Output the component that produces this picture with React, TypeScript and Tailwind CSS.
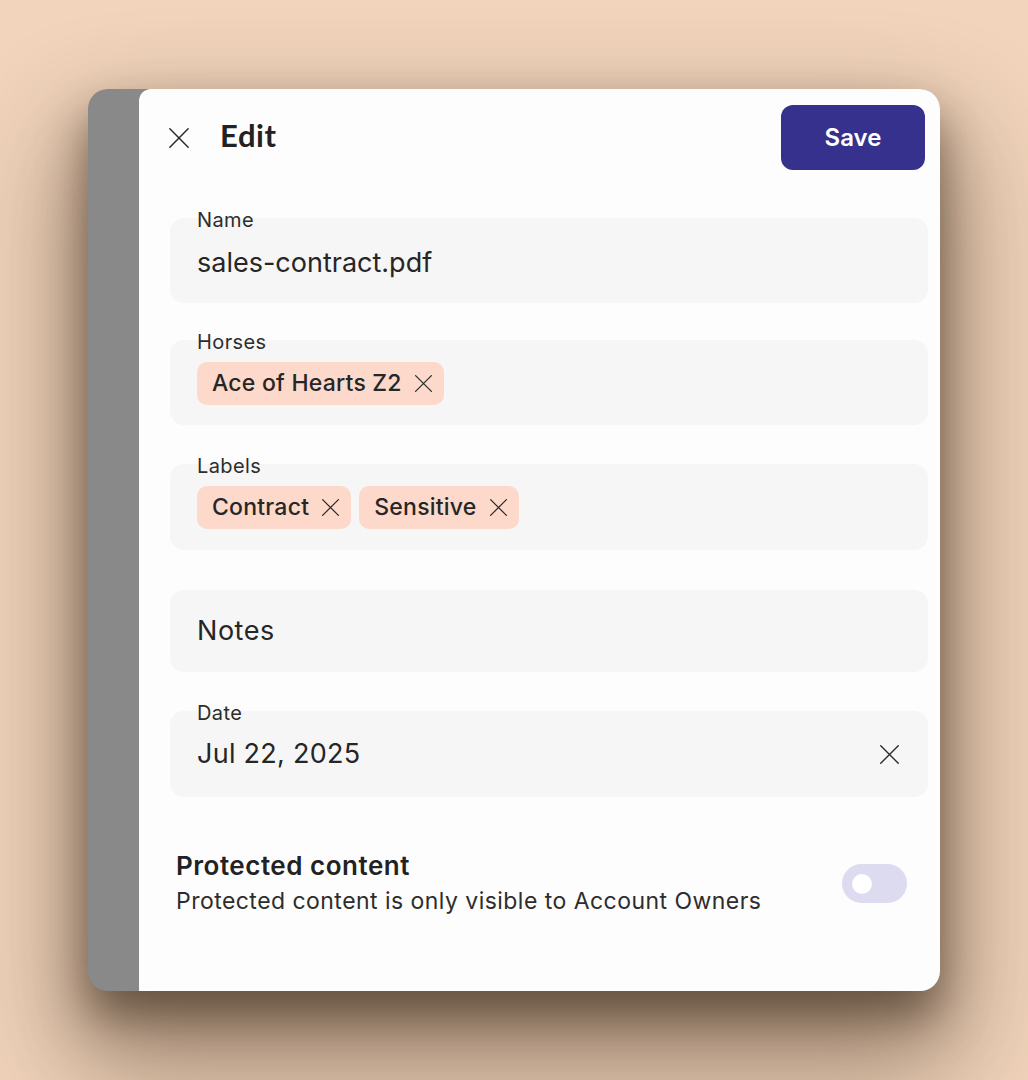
import type { ReactNode } from "react";

function Cross({ size = 22, className = "" }: { size?: number; className?: string }) {
	return (
		<svg
			width={size}
			height={size}
			viewBox="0 0 24 24"
			fill="none"
			stroke="currentColor"
			strokeWidth={1.6}
			strokeLinecap="round"
			className={className}
		>
			<path d="M2 2 22 22M22 2 2 22" />
		</svg>
	);
}

function Chip({ label }: { label: string }) {
	return (
		<div className="flex items-center h-[43px] rounded-[10px] bg-[#fcd9ca] pl-[15px] pr-[11px] gap-[12px]">
			<span className="text-[23px] tracking-[0.01em] font-medium text-[#262626] leading-none">
				{label}
			</span>
			<Cross size={19} className="text-[#2a2a2a]" />
		</div>
	);
}

function Field({
	label,
	className = "",
	children,
}: {
	label?: string;
	className?: string;
	children: ReactNode;
}) {
	return (
		<div className={`rounded-[14px] bg-[#f6f6f6] px-[27px] ${className}`}>
			{label && (
				<div className="-mt-[10px] h-[24px] leading-[24px] text-[20px] tracking-[0.02em] text-[#2d2d2d]">
					{label}
				</div>
			)}
			{children}
		</div>
	);
}

export default function App() {
	return (
		<div
			className="h-screen w-full flex items-center justify-center bg-[#f1d4bb]"
			style={{ fontFamily: "Inter, 'Noto Sans', sans-serif" }}
		>
			<div className="flex w-[852px] h-[902px] rounded-[20px] overflow-hidden bg-[#898989] shadow-[0_25px_45px_rgba(50,35,20,0.55),0_60px_110px_20px_rgba(60,40,25,0.45)]">
				<div className="w-[51px] shrink-0" />
				<div className="flex-1 flex flex-col bg-[#fdfdfd] rounded-tl-[12px]">
					<div className="flex items-center pt-[16px] pr-[15px] pl-[29px]">
						<Cross size={22} className="text-[#2a2a2a]" />
						<h1
							className="ml-[30px] -mt-[4px] text-[31px] tracking-[0.02em] font-bold text-[#222]"
							style={{ fontFamily: "Lato, Inter, sans-serif" }}
						>
							Edit
						</h1>
						<button
							type="button"
							className="ml-auto w-[144px] h-[65px] rounded-[12px] bg-[#35318d] text-white text-[24px] font-semibold"
						>
							Save
						</button>
					</div>

					<div className="mt-[48px] pl-[31px] pr-[12px] flex flex-col">
						<Field label="Name">
							<div className="mt-[15px] pb-[24px] leading-[32px] text-[27px] text-[#262626]">
								sales-contract.pdf
							</div>
						</Field>
						<Field label="Horses" className="mt-[37px]">
							<div className="mt-[8px] pb-[20px] flex gap-[8px]">
								<Chip label="Ace of Hearts Z2" />
							</div>
						</Field>
						<Field label="Labels" className="mt-[39px]">
							<div className="mt-[8px] pb-[21px] flex gap-[8px]">
								<Chip label="Contract" />
								<Chip label="Sensitive" />
							</div>
						</Field>
						<Field className="mt-[40px]">
							<div className="h-[82px] flex items-center text-[27px] tracking-[0.02em] text-[#262626]">
								Notes
							</div>
						</Field>
						<Field label="Date" className="mt-[39px]">
							<div className="mt-[13px] pb-[27px] flex items-center justify-between">
								<span className="leading-[32px] text-[27px] tracking-[0.01em] text-[#262626]">
									Jul 22, 2025
								</span>
								<Cross size={21} className="text-[#2a2a2a] mr-[1px]" />
							</div>
						</Field>
					</div>

					<div className="mt-[54px] pl-[37px] pr-[33px] flex items-center justify-between">
						<div className="flex flex-col">
							<span className="text-[26px] leading-[30px] tracking-[0.02em] font-semibold text-[#222]">
								Protected content
							</span>
							<span className="mt-[5px] text-[23px] leading-[30px] tracking-[0.02em] text-[#2d2d2d]">
								Protected content is only visible to Account Owners
							</span>
						</div>
						<div className="w-[65px] h-[39px] rounded-full bg-[#dddbf0] flex items-center pl-[10px]">
							<div className="w-[20px] h-[20px] rounded-full bg-white" />
						</div>
					</div>
				</div>
			</div>
		</div>
	);
}
